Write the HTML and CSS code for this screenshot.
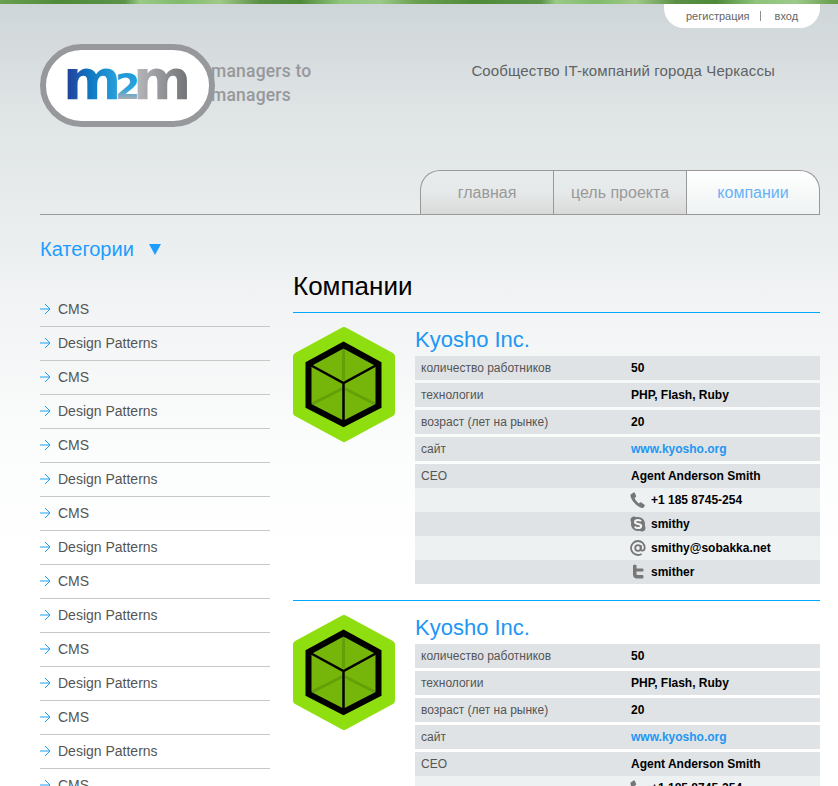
FILE: index.html
```html
<!DOCTYPE html>
<html lang="ru">
<head>
<meta charset="utf-8">
<title>m2m — Компании</title>
<link rel="stylesheet" href="styles.css">
</head>
<body>
<svg class="sprites" width="0" height="0" aria-hidden="true">
  <defs>
    <linearGradient id="mBlue" gradientUnits="userSpaceOnUse" x1="20" y1="0" x2="72" y2="0">
      <stop offset="0" stop-color="#243f9b"/><stop offset=".45" stop-color="#0f78c2"/><stop offset="1" stop-color="#2aa3de"/>
    </linearGradient>
    <linearGradient id="mGray" gradientUnits="userSpaceOnUse" x1="90" y1="0" x2="142" y2="0">
      <stop offset="0" stop-color="#b5b6b9"/><stop offset="1" stop-color="#707175"/>
    </linearGradient>
    <linearGradient id="mTwo" gradientUnits="userSpaceOnUse" x1="0" y1="22" x2="0" y2="48">
      <stop offset="0" stop-color="#1f9ad8"/><stop offset=".6" stop-color="#2aa3de"/><stop offset="1" stop-color="#a9adb3"/>
    </linearGradient>
    <symbol id="hex" viewBox="0 0 102 115">
      <path class="hex-bg" d="M51 4 98 29.500V85.500L51 111 4 85.500V29.500Z"/>
      <path class="hex-cube" d="M50.500 18 85.500 37V79L50.500 97 15.500 79V37Z"/>
      <path class="hex-back" d="M50.500 18V53M50.500 61 17 78M50.500 61 84 78"/>
      <path class="hex-front" d="M15.500 37 50.500 56 85.500 37M50.500 56V97"/>
      <path class="hex-edge" d="M50.500 18 85.500 37V79L50.500 97 15.500 79V37Z"/>
    </symbol>
    <symbol id="arrow" viewBox="0 0 11 12">
      <path d="M0 6H10M5 1 10 6 5 11" fill="none" stroke="#1ca0f5" stroke-width="1"/>
    </symbol>
    <symbol id="phone" viewBox="0 0 16 16">
      <path d="M1 2.200 3.600.5c.5-.3 1-.1 1.200.4l1.300 2.900c.2.500.1.900-.3 1.200L4.600 6c.6 2 2.400 4.300 4.300 5.400l1.100-1c.4-.3.900-.3 1.300 0l3.200 2.300c.4.300.5.800.2 1.200l-1.200 1.700c-.4.500-1 .6-1.600.4C6.300 14.100 1.600 8.800.4 3.700.3 3 .5 2.500 1 2.200Z"/>
    </symbol>
    <symbol id="skype" viewBox="0 0 16 16">
      <path d="M4 .5c1 0 1.700.4 2.300.7C6.800 1 7.400 1 8 1c4 0 7 3 7 7 0 .6 0 1.100-.2 1.700.3.600.7 1.300.7 2.300 0 2-1.500 3.500-3.500 3.500-1 0-1.700-.4-2.300-.7-.6.2-1.100.2-1.700.2-4 0-7-3-7-7 0-.6 0-1.200.2-1.700C.9 5.700.5 5 .5 4 .5 2 2 .5 4 .5Z"/>
      <path class="skype-s" d="M11 5.300C10.400 4.300 9.300 3.900 8 3.900c-1.700 0-3 .8-3 2.100 0 2.900 6.200 1.300 6.200 4 0 1.300-1.300 2.100-3.100 2.100-1.500 0-2.700-.6-3.300-1.700"/>
    </symbol>
    <symbol id="at" viewBox="0 0 16 16">
      <circle class="at-line" cx="8" cy="8" r="2.800"/>
      <path class="at-line" d="M10.800 5v4.200c0 2.200 3.900 2 3.900-1.400C14.700 3.800 11.600 1 8 1 4.100 1 1 4.100 1 8s3.100 7 7 7c1.500 0 2.600-.3 3.700-1"/>
    </symbol>
    <symbol id="twitter" viewBox="0 0 16 16">
      <path d="M3 1.500c0-.8 3.500-1 3.500 0v3h6.200c1 0 1.200 3 0 3H6.500v2.300c0 .8.400 1.200 1.200 1.200h5c1 0 1.200 3.500 0 3.500H7c-2.500 0-4-1.500-4-4Z"/>
    </symbol>
  </defs>
</svg>

<div class="strip"></div>
<div class="page">
  <header class="header">
    <div class="auth">
      <a class="auth-link" href="#">регистрация</a>
      <span class="auth-sep"></span>
      <a class="auth-link" href="#">вход</a>
    </div>
    <div class="brand">
      <div class="logo">
        <svg class="logo-mark" width="162" height="80" viewBox="0 -5 162 80" role="img" aria-label="m2m">
          <text class="logo-text" y="47.500"><tspan x="16" fill="url(#mBlue)">m</tspan><tspan class="logo-two" x="68" fill="url(#mTwo)">2</tspan><tspan x="86" fill="url(#mGray)">m</tspan></text>
        </svg>
      </div>
      <div class="tagline">managers to<br>managers</div>
      <div class="slogan">Сообщество IT-компаний города Черкассы</div>
    </div>
    <nav class="nav">
      <a class="tab tab-first" href="#">главная</a>
      <a class="tab" href="#">цель проекта</a>
      <a class="tab tab-active" href="#">компании</a>
    </nav>
  </header>

  <div class="content">
    <aside class="sidebar">
      <h2 class="cat-title">Категории <span class="cat-tri"></span></h2>
      <ul class="cat-list">
        <li class="cat-item"><svg class="cat-arrow"><use href="#arrow"/></svg>CMS</li>
        <li class="cat-item"><svg class="cat-arrow"><use href="#arrow"/></svg>Design Patterns</li>
        <li class="cat-item"><svg class="cat-arrow"><use href="#arrow"/></svg>CMS</li>
        <li class="cat-item"><svg class="cat-arrow"><use href="#arrow"/></svg>Design Patterns</li>
        <li class="cat-item"><svg class="cat-arrow"><use href="#arrow"/></svg>CMS</li>
        <li class="cat-item"><svg class="cat-arrow"><use href="#arrow"/></svg>Design Patterns</li>
        <li class="cat-item"><svg class="cat-arrow"><use href="#arrow"/></svg>CMS</li>
        <li class="cat-item"><svg class="cat-arrow"><use href="#arrow"/></svg>Design Patterns</li>
        <li class="cat-item"><svg class="cat-arrow"><use href="#arrow"/></svg>CMS</li>
        <li class="cat-item"><svg class="cat-arrow"><use href="#arrow"/></svg>Design Patterns</li>
        <li class="cat-item"><svg class="cat-arrow"><use href="#arrow"/></svg>CMS</li>
        <li class="cat-item"><svg class="cat-arrow"><use href="#arrow"/></svg>Design Patterns</li>
        <li class="cat-item"><svg class="cat-arrow"><use href="#arrow"/></svg>CMS</li>
        <li class="cat-item"><svg class="cat-arrow"><use href="#arrow"/></svg>Design Patterns</li>
        <li class="cat-item"><svg class="cat-arrow"><use href="#arrow"/></svg>CMS</li>
      </ul>
    </aside>

    <main class="main">
      <h1 class="title">Компании</h1>
      <div class="rule"></div>

      <article class="company">
        <svg class="company-logo"><use href="#hex"/></svg>
        <div class="company-body">
          <h3 class="company-name">Kyosho Inc.</h3>
          <div class="row"><span class="label">количество работников</span><span class="value">50</span></div>
          <div class="row"><span class="label">технологии</span><span class="value">PHP, Flash, Ruby</span></div>
          <div class="row"><span class="label">возраст (лет на рынке)</span><span class="value">20</span></div>
          <div class="row"><span class="label">сайт</span><a class="value value-link" href="#">www.kyosho.org</a></div>
          <div class="ceo">
            <div class="row"><span class="label">CEO</span><span class="value">Agent Anderson Smith</span></div>
            <div class="row row-light"><span class="label"></span><svg class="icon"><use href="#phone"/></svg><span class="value">+1 185 8745-254</span></div>
            <div class="row"><span class="label"></span><svg class="icon"><use href="#skype"/></svg><span class="value">smithy</span></div>
            <div class="row row-light"><span class="label"></span><svg class="icon"><use href="#at"/></svg><span class="value">smithy@sobakka.net</span></div>
            <div class="row"><span class="label"></span><svg class="icon"><use href="#twitter"/></svg><span class="value">smither</span></div>
          </div>
        </div>
      </article>
      <div class="rule"></div>

      <article class="company">
        <svg class="company-logo"><use href="#hex"/></svg>
        <div class="company-body">
          <h3 class="company-name">Kyosho Inc.</h3>
          <div class="row"><span class="label">количество работников</span><span class="value">50</span></div>
          <div class="row"><span class="label">технологии</span><span class="value">PHP, Flash, Ruby</span></div>
          <div class="row"><span class="label">возраст (лет на рынке)</span><span class="value">20</span></div>
          <div class="row"><span class="label">сайт</span><a class="value value-link" href="#">www.kyosho.org</a></div>
          <div class="ceo">
            <div class="row"><span class="label">CEO</span><span class="value">Agent Anderson Smith</span></div>
            <div class="row row-light"><span class="label"></span><svg class="icon"><use href="#phone"/></svg><span class="value">+1 185 8745-254</span></div>
            <div class="row"><span class="label"></span><svg class="icon"><use href="#skype"/></svg><span class="value">smithy</span></div>
            <div class="row row-light"><span class="label"></span><svg class="icon"><use href="#at"/></svg><span class="value">smithy@sobakka.net</span></div>
            <div class="row"><span class="label"></span><svg class="icon"><use href="#twitter"/></svg><span class="value">smither</span></div>
          </div>
        </div>
      </article>
    </main>
  </div>
</div>
</body>
</html>
```
FILE: styles.css
```css
* { box-sizing: border-box; }
html, body { margin: 0; padding: 0; height: 100%; overflow: hidden; }
body {
  font-family: "Liberation Sans", Arial, sans-serif;
  background: linear-gradient(180deg, #ced5d8 0, #dfe4e5 110px, #e8ecec 210px, #f1f3f4 300px, #fbfcfc 440px, #ffffff 560px);
}
.sprites { position: absolute; }
.hex-bg { fill: #8fde0f; stroke: #8fde0f; stroke-width: 8; stroke-linejoin: round; }
.hex-cube { fill: #76b60a; }
.hex-back { fill: none; stroke: #649e08; stroke-width: 3; }
.hex-front { fill: none; stroke: #000; stroke-width: 2.500; }
.hex-edge { fill: none; stroke: #000; stroke-width: 6; }
.skype-s { fill: none; stroke: #f2f4f5; stroke-width: 2; }
.at-line { fill: none; stroke: #777; stroke-width: 1.800; }

.strip {
  height: 4px;
  background: repeating-linear-gradient(90deg, #6aa050 0, #4f8a3a 60px, #5b9448 125px, #9bc987 140px, #7fbb6a 180px, #a0c888 220px, #5a9045 260px, #4f8a3a 300px, #8ec47b 340px, #9cc98a 380px, #6aa050 416px);
}
.page { padding: 0 18px 0 40px; }

.auth {
  display: flex;
  align-items: center;
  justify-content: flex-start;
  width: 156px;
  height: 24px;
  margin-left: auto;
  padding-left: 22px;
  background: #fff;
  border-radius: 0 0 20px 20px;
  font-size: 11px;
}
.auth-link { color: #666; text-decoration: none; }
.auth-sep { width: 1px; height: 10px; margin: 0 14px 0 10px; background: #8a8f92; }

.brand { display: flex; align-items: flex-start; margin-top: 16px; height: 83px; }
.logo {
  position: relative;
  z-index: 1;
  flex: none;
  width: 175px;
  height: 83px;
  display: flex;
  align-items: center;
  justify-content: center;
  background: #fff;
  border: 6.500px solid #97989c;
  border-radius: 42px;
}
.logo-mark { flex: none; }
.logo-text { font-family: "DejaVu Sans", sans-serif; font-weight: 700; font-size: 56px; }
.logo-two { font-size: 36px; }
.tagline {
  margin: 15px 0 0 -4px;
  font-family: "Roboto", sans-serif;
  font-weight: 500;
  font-size: 17.500px;
  line-height: 24px;
  letter-spacing: .2px;
  color: #97989c;
}
.slogan {
  margin: 18px 0 0 auto;
  padding-right: 45px;
  font-size: 15px;
  letter-spacing: .13px;
  line-height: 18px;
  color: #5f6365;
}

.nav {
  display: flex;
  justify-content: flex-end;
  margin-top: 43px;
  border-bottom: 1px solid #999;
}
.tab {
  width: 133px;
  height: 44px;
  display: flex;
  align-items: center;
  justify-content: center;
  border: 1px solid #999;
  border-width: 1px 1px 0 0;
  background: linear-gradient(180deg, #e8ecec 0, #e6e9e9 50%, #d9d9d9 100%);
  color: #999;
  font-size: 16px;
  text-decoration: none;
}
.tab-first { width: 134px; border-left-width: 1px; border-top-left-radius: 20px; }
.tab-active {
  background: linear-gradient(180deg, #ffffff 0, #eff3f3 100%);
  color: #67b2f6;
  border-top-right-radius: 20px;
}

.content { display: flex; gap: 23px; }
.sidebar { flex: none; width: 230px; }
.cat-title {
  margin: 21px 0 0;
  height: 26px;
  display: flex;
  align-items: center;
  font-weight: 400;
  font-size: 20px;
  line-height: 26px;
  color: #1c9dff;
}
.cat-tri {
  margin: 0 0 0 15px;
  border-top: 11px solid #1c9dff;
  border-left: 6px solid transparent;
  border-right: 6px solid transparent;
}
.cat-list { margin: 31px 0 0; padding: 0; list-style: none; }
.cat-item {
  height: 34px;
  display: flex;
  align-items: center;
  padding-bottom: 1px;
  border-bottom: 1px solid #c8c8c8;
  font-size: 14px;
  color: #555;
}
.cat-arrow { flex: none; width: 11px; height: 12px; margin-right: 7px; }

.main { flex: 1; min-width: 0; }
.title {
  margin: 0;
  height: 97px;
  padding-top: 55px;
  font-weight: 400;
  font-size: 26px;
  line-height: 32px;
  color: #000;
}
.rule { height: 1px; background: #00a8ff; }
.company {
  display: flex;
  gap: 20px;
  height: 287px;
  padding-top: 14px;
}
.company-logo { flex: none; width: 102px; height: 115px; }
.company-body { flex: 1; min-width: 0; }
.company-name {
  margin: 0;
  height: 29px;
  font-weight: 400;
  font-size: 22px;
  line-height: 26px;
  color: #2196f3;
}
.row {
  display: flex;
  align-items: center;
  height: 24px;
  margin-bottom: 3px;
  background: #dfe3e5;
  font-size: 12px;
}
.ceo .row { margin-bottom: 0; }
.row-light { background: #eef1f2; }
.label { flex: none; width: 216px; padding-left: 6px; color: #555; }
.value { font-weight: 700; color: #000; }
.value-link { color: #2196f3; text-decoration: none; }
.icon { flex: none; width: 16px; height: 16px; margin: 0 5px 0 -1px; fill: #777; }
```
